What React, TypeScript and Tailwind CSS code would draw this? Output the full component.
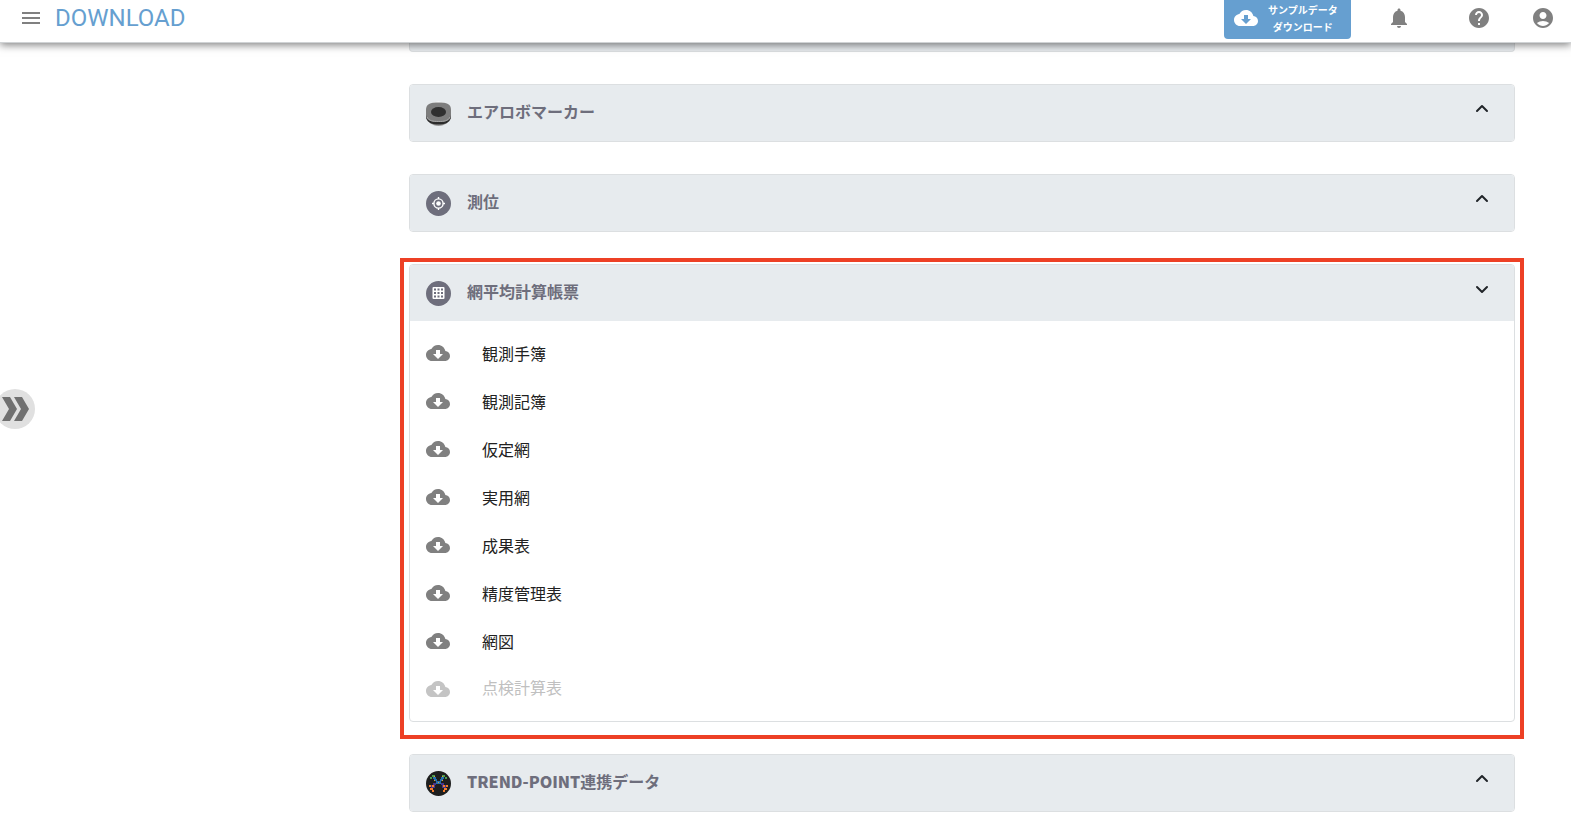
import type { ReactNode } from "react";
import { MdAccountCircle, MdHelp, MdMenu, MdNotifications } from "react-icons/md";

type Report = { name: string; disabled?: boolean };

const reports: Report[] = [
  { name: "観測手簿" },
  { name: "観測記簿" },
  { name: "仮定網" },
  { name: "実用網" },
  { name: "成果表" },
  { name: "精度管理表" },
  { name: "網図" },
  { name: "点検計算表", disabled: true },
];

function CloudDownloadIcon() {
  return (
    <svg viewBox="0 0 24 24" className="size-6 shrink-0" fill="currentColor" aria-hidden="true">
      <path d="M19.35 10.04C18.67 6.59 15.64 4 12 4 9.11 4 6.6 5.64 5.35 8.04 2.34 8.36 0 10.91 0 14c0 3.31 2.69 6 6 6h13c2.76 0 5-2.24 5-5 0-2.64-2.05-4.78-4.65-4.96zM17 13l-5 5-5-5h3V9h4v4h3z" />
    </svg>
  );
}

function MarkerIcon() {
  return (
    <svg viewBox="0 0 25 25" className="size-[25px]" aria-hidden="true">
      <path d="M4 3Q12.5-2 21 3z" fill="#fff" />
      <path d="M1 14h23c0 7-5 11-11.5 11S1 21 1 14z" fill="#999" />
      <path d="M0 13h25v4c-2 5-6 6.500-12.500 6.500S2 22 0 17z" fill="#2c2c2c" />
      <path d="M0 9c0-6 4-7.500 12.500-7.500S25 3 25 9v5c0 5.500-5 7-12.500 7S0 19.500 0 14z" fill="#7d7d7d" />
      <path d="M1 16c2 4 6 4.500 11.500 4.500S22 20 24 16" fill="none" stroke="#a6a6a6" />
      <ellipse cx="12.5" cy="11" rx="7.5" ry="5" fill="#303030" />
    </svg>
  );
}

function PositionIcon() {
  return (
    <svg viewBox="0 0 25 25" className="size-[25px]" aria-hidden="true">
      <circle cx="12.5" cy="12.5" r="12.5" fill="#6e6e7c" />
      <g fill="none" stroke="#fff" strokeWidth="1.4">
        <circle cx="12.5" cy="12.5" r="4.6" />
        <path d="M12.5 6v2M12.5 17v2M6 12.5h2M17 12.5h2" />
      </g>
      <circle cx="12.5" cy="12.5" r="2.3" fill="#fff" />
    </svg>
  );
}

function GridIcon() {
  return (
    <svg viewBox="0 0 25 25" className="size-[25px]" aria-hidden="true">
      <circle cx="12.5" cy="12.5" r="12.5" fill="#6e6e7c" />
      <rect x="6.5" y="6" width="12" height="12" rx="1" fill="#fff" />
      <path
        d="M8 7.500h2v2H8zM11.500 7.500h2v2h-2zM15 7.500h2v2h-2zM8 11h2v2H8zM11.500 11h2v2h-2zM15 11h2v2h-2zM8 14.500h2v2H8zM11.500 14.500h2v2h-2zM15 14.500h2v2h-2z"
        fill="#6e6e7c"
      />
    </svg>
  );
}

function TrendPointIcon() {
  return (
    <svg viewBox="0 0 25 25" className="size-[25px]" aria-hidden="true">
      <circle cx="12.5" cy="12.5" r="12.5" fill="#1e1e1e" />
      <path d="M6 4h3v2H6zM16 4h3v2h-3zM4 6h2v2H4zM19 6h2v2h-2z" fill="#4a9a4e" />
      <path d="M7 6h3v2H7zM15 6h3v2h-3zM8 8h3v2H8zM14 8h3v2h-3zM10 10h5v3h-5z" fill="#256fae" />
      <path d="M8 9h1v1H8zM16 9h1v1h-1zM12 11h1v1h-1zM8 5h1v1H8zM16 5h1v1h-1z" fill="#d8a637" />
      <path d="M7 12h3v2H7zM15 12h3v2h-3zM5 14h4v3H5zM16 14h4v3h-4z" fill="#46358c" />
      <path
        d="M3 14h2v2H3zM20 14h2v2h-2zM6 14h2v2H6zM17 14h2v2h-2zM4 17h3v2H4zM18 17h3v2h-3zM6 19h2v2H6zM17 19h2v2h-2z"
        fill="#f37b2c"
      />
    </svg>
  );
}

function Chevron({ open }: { open: boolean }) {
  return (
    <svg
      viewBox="0 0 24 24"
      className="size-6"
      fill="none"
      stroke="#212529"
      strokeWidth="2"
      strokeLinecap="round"
      strokeLinejoin="round"
      aria-hidden="true"
    >
      <path d={open ? "M7 10l5 5 5-5" : "M7 14l5-5 5 5"} />
    </svg>
  );
}

function Panel({
  title,
  icon,
  open = false,
  children,
}: {
  title: ReactNode;
  icon: ReactNode;
  open?: boolean;
  children?: ReactNode;
}) {
  return (
    <section className="overflow-hidden rounded border border-[#dcdfe1] bg-white">
      <h2>
        <button
          type="button"
          aria-expanded={open}
          className="flex h-14 w-full items-center bg-[#e7ebee] pr-5 pb-1 pl-4 text-left text-[#6e6e7c]"
        >
          <span className="pt-1">{icon}</span>
          <span className="ml-4 flex-1 text-base font-bold">{title}</span>
          <span className="pb-1">
            <Chevron open={open} />
          </span>
        </button>
      </h2>
      {children}
    </section>
  );
}

export default function App() {
  return (
    <div className="min-h-screen bg-white font-['Noto_Sans_CJK_JP',sans-serif] text-[#212121]">
      <header className="relative z-10 flex h-[43px] items-start border-b border-[#d0d3d5] bg-white pr-4 pl-[19px] text-[#808080] shadow-[0_2px_8px_rgba(0,0,0,0.5)]">
        <button type="button" aria-label="メニュー" className="mt-1.5">
          <MdMenu className="size-6" />
        </button>
        <h1 className="ml-3 flex-1 font-[Roboto,sans-serif] text-2xl leading-9 text-[#669fd0]">
          DOWNLOAD
        </h1>
        <button
          type="button"
          className="flex h-[39px] w-[127px] items-center rounded-b bg-[#669fd0] pb-1 pl-2.5 text-white"
        >
          <CloudDownloadIcon />
          <span className="ml-2.5 text-center text-[10px] leading-[17px] font-bold">
            サンプルデータ
            <br />
            ダウンロード
          </span>
        </button>
        <button type="button" aria-label="お知らせ" className="mt-1.5 ml-9">
          <MdNotifications className="size-6" />
        </button>
        <button type="button" aria-label="ヘルプ" className="mt-1.5 ml-14">
          <MdHelp className="size-6" />
        </button>
        <button type="button" aria-label="アカウント" className="mt-1.5 ml-10">
          <MdAccountCircle className="size-6" />
        </button>
      </header>

      <div className="flex">
        <aside className="w-[400px] shrink-0">
          <button
            type="button"
            aria-label="サイドバーを開く"
            className="fixed top-1/2 -left-[5px] size-10 -translate-y-1/2 rounded-full bg-[#e0e0e0]"
          >
            <svg viewBox="0 0 40 40" className="size-10" aria-hidden="true">
              <path
                d="M7 8h8l7 12-7 12H7l7-12zM19 8h8l7 12-7 12h-8l7-12z"
                fill="#707070"
              />
            </svg>
          </button>
        </aside>

        <main className="mr-[47px] flex-1">
          <div className="mx-[9px] h-[9px] rounded-b border border-t-0 border-[#dcdfe1] bg-[#e7ebee]" />
          <div className="mx-[9px] mt-8 flex flex-col gap-8">
            <Panel title="エアロボマーカー" icon={<MarkerIcon />} />
            <Panel title="測位" icon={<PositionIcon />} />
          </div>

          <div className="mt-[26px] border-4 border-[#ed4025] px-[5px] pt-0.5 pb-[13px]">
            <Panel title="網平均計算帳票" icon={<GridIcon />} open>
              <ul className="py-2">
                {reports.map((report) => (
                  <li key={report.name}>
                    <button
                      type="button"
                      disabled={report.disabled}
                      className="group flex h-12 w-full items-center pl-4 text-left text-base disabled:text-[#c0c0c0]"
                    >
                      <span className="text-[#808080] group-disabled:text-[#c4c4c4]">
                        <CloudDownloadIcon />
                      </span>
                      <span className="ml-8 group-disabled:pb-1">{report.name}</span>
                    </button>
                  </li>
                ))}
              </ul>
            </Panel>
          </div>

          <div className="mx-[9px] mt-[15px]">
            <Panel
              title={
                <>
                  <span className="font-black">TREND-POINT</span>連携データ
                </>
              }
              icon={<TrendPointIcon />}
            />
          </div>
        </main>
      </div>
    </div>
  );
}
